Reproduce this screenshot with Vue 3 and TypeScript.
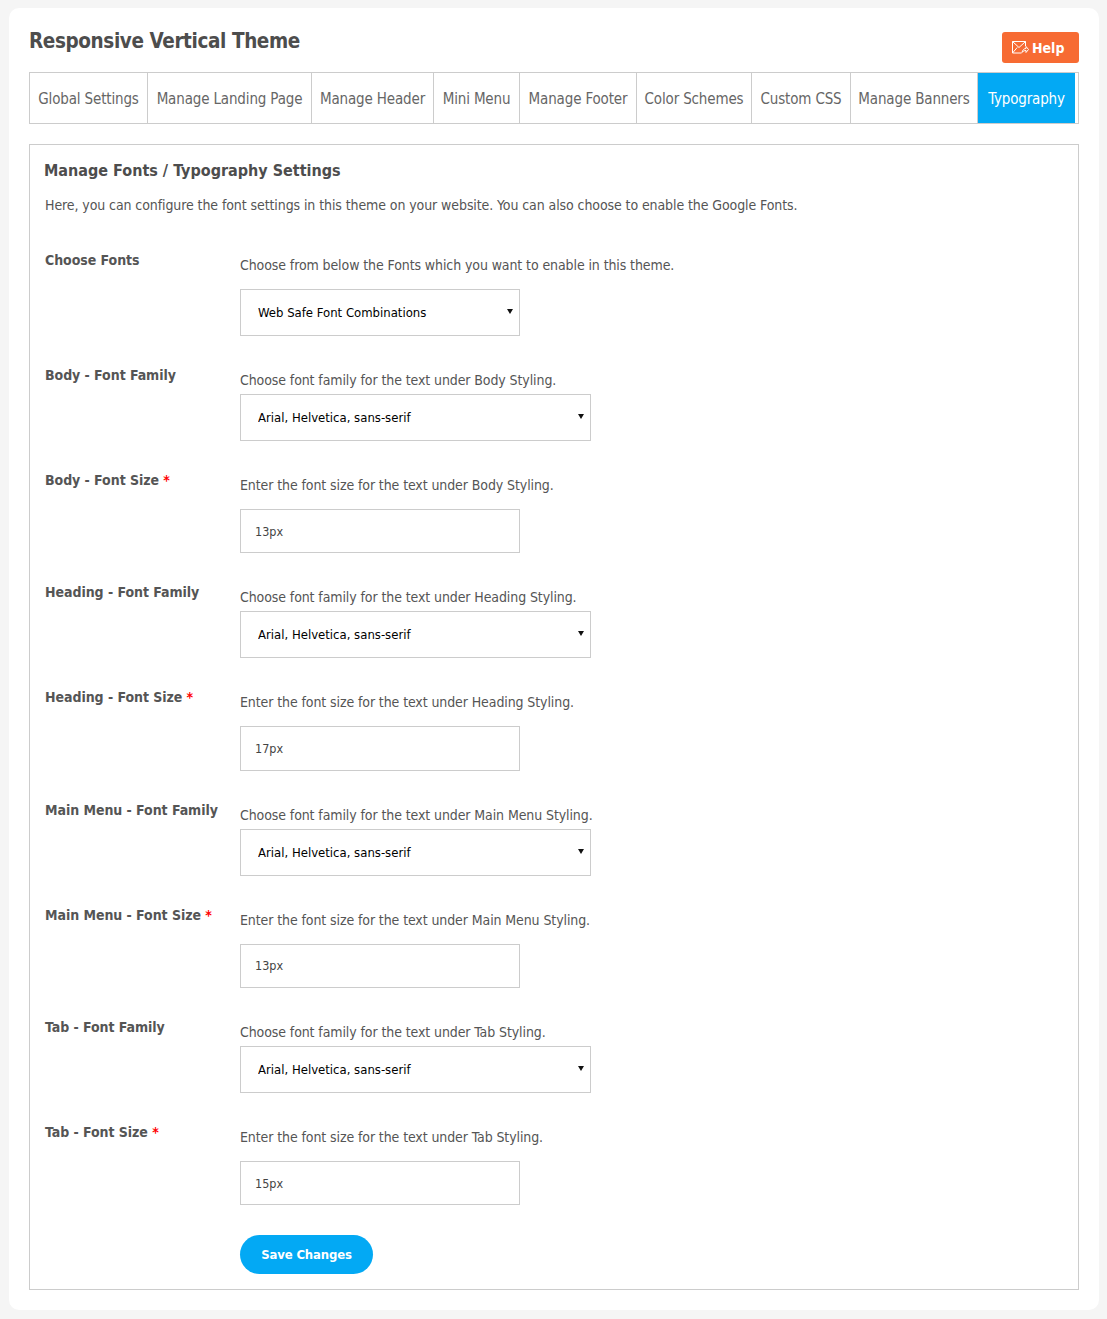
<template>
  <div class="card">
    <div class="top">
      <h1 class="page-title">Responsive Vertical Theme</h1>
      <a class="help" href="#">
        <svg class="help-icon" width="17" height="13" viewBox="0 0 17 13" fill="none" stroke="#fff" stroke-width="1">
          <path d="M13.5 5V.5H.5v11.500h9" />
          <path d="M.5.5 7 6.500 13.500.5M.5 12l4.700-5.500" />
          <path d="M10 11.500c.5-3 2.500-4 4-4V5.500l2.500 3-2.500 3V9.500c-1.500 0-3 .5-4 2z" />
        </svg>
        Help
      </a>
    </div>

    <nav class="tabs">
      <a
        v-for="tab in tabs"
        :key="tab.name"
        class="tab"
        :class="{ active: tab.name === 'Typography' }"
        :style="{ width: tab.width + 'px' }"
        href="#"
      >{{ tab.name }}</a>
    </nav>

    <section class="panel">
      <h2 class="panel-title">Manage Fonts / Typography Settings</h2>
      <p class="intro">Here, you can configure the font settings in this theme on your website. You can also choose to enable the Google Fonts.</p>

      <div class="rows">
        <div v-for="row in rows" :key="row.label" class="row">
          <div class="label">{{ row.label }}<span v-if="row.required" class="req"> *</span></div>
          <div class="field">
            <p class="desc" :class="{ tight: row.kind === 'select' }">{{ row.desc }}</p>
            <div v-if="row.kind !== 'input'" class="select-wrap" :class="{ short: row.kind === 'first' }">
              <select class="select">
                <option>{{ row.value }}</option>
              </select>
            </div>
            <input v-else class="input" type="text" :value="row.value" />
          </div>
        </div>
      </div>

      <button class="save" type="button">Save Changes</button>
    </section>
  </div>
</template>

<script setup lang="ts">
interface Row {
  label: string
  desc: string
  kind: 'first' | 'select' | 'input'
  value: string
  required?: boolean
}

const tabs = [
  { name: 'Global Settings', width: 118 },
  { name: 'Manage Landing Page', width: 164 },
  { name: 'Manage Header', width: 122 },
  { name: 'Mini Menu', width: 86 },
  { name: 'Manage Footer', width: 117 },
  { name: 'Color Schemes', width: 115 },
  { name: 'Custom CSS', width: 99 },
  { name: 'Manage Banners', width: 127 },
  { name: 'Typography', width: 97 }
]

const arial = 'Arial, Helvetica, sans-serif'

const rows: Row[] = [
  { label: 'Choose Fonts', desc: 'Choose from below the Fonts which you want to enable in this theme.', kind: 'first', value: 'Web Safe Font Combinations' },
  { label: 'Body - Font Family', desc: 'Choose font family for the text under Body Styling.', kind: 'select', value: arial },
  { label: 'Body - Font Size', desc: 'Enter the font size for the text under Body Styling.', kind: 'input', value: '13px', required: true },
  { label: 'Heading - Font Family', desc: 'Choose font family for the text under Heading Styling.', kind: 'select', value: arial },
  { label: 'Heading - Font Size', desc: 'Enter the font size for the text under Heading Styling.', kind: 'input', value: '17px', required: true },
  { label: 'Main Menu - Font Family', desc: 'Choose font family for the text under Main Menu Styling.', kind: 'select', value: arial },
  { label: 'Main Menu - Font Size', desc: 'Enter the font size for the text under Main Menu Styling.', kind: 'input', value: '13px', required: true },
  { label: 'Tab - Font Family', desc: 'Choose font family for the text under Tab Styling.', kind: 'select', value: arial },
  { label: 'Tab - Font Size', desc: 'Enter the font size for the text under Tab Styling.', kind: 'input', value: '15px', required: true }
]
</script>

<style>
html,
body {
  background: #f5f5f5;
}
</style>

<style scoped>
.card {
  box-sizing: border-box;
  width: 1090px;
  height: 1302px;
  margin: 8px 0 9px 9px;
  padding: 24px 20px 20px;
  background: #fff;
  border-radius: 10px;
  font-family: "DejaVu Sans", "Noto Sans", sans-serif;
  font-stretch: condensed;
  color: #555;
}

.top {
  display: flex;
  justify-content: space-between;
  height: 40px;
}

.page-title {
  margin: 0;
  font-size: 20.5px;
  line-height: 18px;
  font-weight: 700;
  color: #4d4d4d;
  letter-spacing: -0.4px;
}

.help {
  box-sizing: border-box;
  display: flex;
  align-items: center;
  gap: 3px;
  width: 77px;
  height: 31px;
  margin-bottom: 9px;
  padding-left: 10px;
  background: #f76b33;
  border-radius: 3px;
  color: #fff;
  font-size: 14px;
  font-weight: 700;
  text-decoration: none;
}

.help-icon {
  flex: none;
}

.tabs {
  box-sizing: border-box;
  display: flex;
  height: 52px;
  border: 1px solid #ccc;
}

.tab {
  box-sizing: border-box;
  display: flex;
  align-items: center;
  justify-content: center;
  padding-top: 1px;
  border-right: 1px solid #ccc;
  color: #666;
  font-size: 15px;
  letter-spacing: -0.15px;
  text-decoration: none;
  white-space: nowrap;
}

.tab.active {
  background: #03a9f4;
  border-right: 0;
  color: #fff;
}

.panel {
  box-sizing: border-box;
  height: 1146px;
  margin-top: 20px;
  padding: 16px 14px 0;
  border: 1px solid #ccc;
}

.panel-title {
  margin: 0;
  font-size: 16px;
  line-height: 20px;
  font-weight: 700;
  color: #4d4d4d;
}

.intro {
  margin: 14px 0 0 1px;
  font-size: 14px;
  line-height: 20px;
  letter-spacing: -0.09px;
  color: #555;
}

.rows {
  display: flex;
  flex-direction: column;
  gap: 29px;
  margin-top: 35px;
}

.row {
  display: grid;
  grid-template-columns: 195px 1fr;
  padding-left: 1px;
}

.label {
  font-size: 14px;
  line-height: 20px;
  font-weight: 700;
  letter-spacing: -0.05px;
  color: #555;
}

.req {
  color: #f00;
}

.desc {
  margin: 5px 0 14px;
  font-size: 14px;
  line-height: 20px;
  letter-spacing: -0.1px;
  color: #555;
}

.desc.tight {
  margin-bottom: 4px;
}

.select-wrap {
  position: relative;
  width: 351px;
}

.select-wrap.short {
  width: 280px;
}

/* native arrow drawn by hand so it sits where the reference has it */
.select-wrap::after {
  content: "";
  position: absolute;
  top: 20px;
  right: 7px;
  border-style: solid;
  border-width: 5px 3px 0;
  border-color: #111 transparent transparent;
  pointer-events: none;
}

.select {
  box-sizing: border-box;
  display: block;
  width: 100%;
  height: 47px;
  padding: 0 0 0 17px;
  appearance: none;
  background: #fff;
  border: 1px solid #ccc;
  border-radius: 0;
  color: #000;
  font-family: inherit;
  font-stretch: condensed;
  font-size: 13px;
}

.input {
  box-sizing: border-box;
  display: block;
  width: 280px;
  height: 44.33px;
  padding: 0 14px;
  background: #fff;
  border: 1px solid #ccc;
  color: #444;
  font-family: inherit;
  font-stretch: condensed;
  font-size: 12.5px;
}

.save {
  display: block;
  width: 133px;
  height: 39px;
  margin: 30px 0 0 196px;
  padding: 0;
  background: #03a9f4;
  border: 0;
  border-radius: 20px;
  color: #fff;
  font-family: inherit;
  font-stretch: condensed;
  font-size: 13px;
  font-weight: 700;
  letter-spacing: -0.15px;
}
</style>
